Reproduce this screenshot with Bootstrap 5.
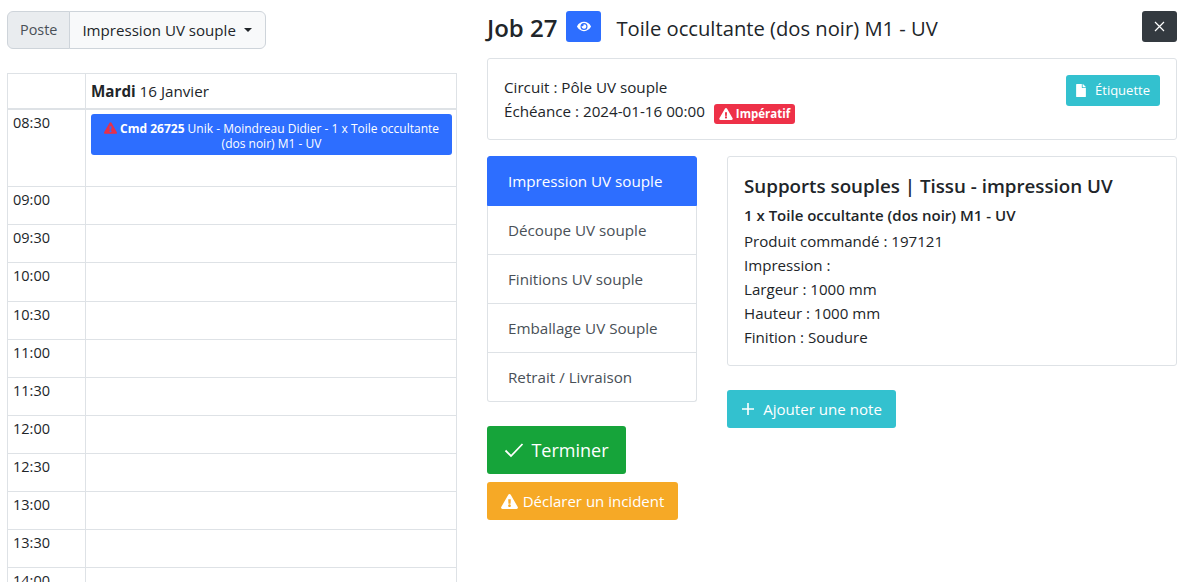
<!DOCTYPE html>
<html lang="fr"><head><meta charset="utf-8"><title>Job 27</title>
<link href="https://cdn.jsdelivr.net/npm/bootstrap@5.3.0/dist/css/bootstrap.min.css" rel="stylesheet">
<style>
html,body{height:582px;overflow:hidden}
body{font-family:"Open Sans","Noto Sans",sans-serif;font-size:15px;color:#212529;background:#fff}
.shell{display:flex;gap:30px;padding:11px 20px 0 7px}
.leftcol{width:450px;flex:none}
.rightcol{flex:1;min-width:0}
.posegroup{height:38px;margin-bottom:24px;width:259px}
.posegroup .input-group-text{background:#e9ecef;border-color:#ced4da;color:#495057;font-size:14.4px;padding:0 12px}
.posegroup .btn{background:#f8f9fa;border-color:#ced4da;color:#212529;font-size:15.1px;padding:0 12px;flex:1;white-space:nowrap;text-align:left}
.posegroup .dropdown-toggle::after{margin-left:8px}
.cal{width:450px;border-collapse:collapse;table-layout:fixed;font-size:14.5px}
.cal td,.cal th{border:1px solid #dee2e6;padding:2px 5px;vertical-align:top;height:38.1px;font-weight:400}
.cal thead th{height:34px;padding:6px 5px 5px;border-bottom-width:2px;font-size:15.2px}
.cal td.timec{width:78px}
.cal tr.tall td{height:78px}
.evt{background:#2d6eff;color:#fff;font-size:12px;line-height:15px;text-align:center;border-radius:3px;padding:7px 8px 4px;display:block;margin:2px -1px 0 0}
.evt svg{width:13px;height:12px;fill:#e8304a;vertical-align:-1px}
.jobhead{display:flex;align-items:center;height:36px;margin-top:-1px;margin-bottom:12px}
.jobhead h1{font-size:24px;font-weight:600;margin:0}
.jobhead h2{font-size:20.2px;font-weight:400;margin:0 0 0 15px;flex:1}
.sq{width:35px;height:31px;padding:0;border:0;border-radius:3px;display:flex;align-items:center;justify-content:center;align-self:flex-start;margin-top:1px}
.sq.eye{background:#2d6eff;margin-left:9px}
.sq.eye svg{width:14px;height:13px;fill:#fff}
.sq.cls{background:#343a40;color:#fff}
.boxx{border:1px solid #dee2e6;border-radius:3px;background:#fff}
.circuit{height:82px;padding:16px;display:flex;justify-content:space-between;line-height:24px;font-size:15.2px;margin-bottom:16px}
.imper{background:#ee3148;color:#fff;font-size:11.5px;font-weight:700;border-radius:3px;padding:2px 5px;margin-left:5px;display:inline-block;line-height:16px;vertical-align:-1px}
.imper svg{width:14px;height:12px;fill:#fff;vertical-align:-2px}
.btn-tq{background:#33c1cf;color:#fff;border:0;border-radius:3px;font-size:13.5px}
.btn-tq:hover{background:#33c1cf;color:#fff}
.etq{height:31px;width:94px;margin-top:0;padding:0;display:flex;align-items:center;justify-content:center;gap:9px;font-size:13px}
.etq svg{width:10px;height:13px;fill:#fff}
.lower{display:flex;gap:30px}
.steps{width:210px;flex:none}
.steps .list-group-item{height:49px;font-size:15.2px;color:#495057;display:flex;align-items:center;padding:0 20px;border-color:#dee2e6}
.steps .list-group-item.active{background:#2d6eff;border-color:#2d6eff;color:#fff;height:50px}
.steps .list-group{border-radius:3px}
.btn-done{background:#16a43a;color:#fff;border:0;border-radius:3px;font-size:18px;height:48px;width:139px;margin-top:24px;display:flex;align-items:center;justify-content:center;gap:7px;padding:0}
.btn-done svg{width:20px;height:16px;stroke:#fff;fill:none;stroke-width:1.8}
.btn-done:hover{background:#16a43a;color:#fff}
.btn-inc{background:#f6a926;color:#fff;border:0;border-radius:3px;font-size:15px;height:38px;width:191px;margin-top:8px;display:flex;align-items:center;justify-content:center;gap:5px;padding:0}
.btn-inc svg{width:17px;height:15px;fill:#fff}
.btn-inc:hover{background:#f6a926;color:#fff}
.detail{flex:1;min-width:0}
.prod{height:210px;padding:15px 16px 16px;font-size:15.1px;line-height:24px}
.prod h3{font-size:18.75px;font-weight:600;margin:0 0 3px;line-height:27px}
.prod h4{font-size:15px;font-weight:600;margin:0 0 1px;line-height:26px}
.addn{height:38px;width:169px;margin-top:24px;font-size:15.1px;display:flex;align-items:center;justify-content:center;gap:8px;padding:0}
.addn svg{width:14px;height:14px;stroke:#fff;stroke-width:1.6;fill:none}
</style></head><body>
<div class="shell">
<div class="leftcol">
<div class="input-group posegroup">
<span class="input-group-text">Poste</span>
<button class="btn dropdown-toggle" type="button">Impression UV souple</button>
</div>
<table class="cal">
<thead><tr><th class="timec" style="width:78px"></th><th><b class="fw-bold">Mardi</b> 16 Janvier</th></tr></thead>
<tbody>
<tr class="tall"><td class="timec">08:30</td><td><span class="evt"><svg viewBox="0 0 576 512"><path d="M569.517 440.013C587.975 472.007 564.806 512 527.94 512H48.054c-36.937 0-59.999-40.055-41.577-71.987L246.423 23.985c18.467-32.009 64.72-31.951 83.154 0l239.94 416.028zM288 354c-25.405 0-46 20.595-46 46s20.595 46 46 46 46-20.595 46-46-20.595-46-46-46zm-43.673-165.346l7.418 136c.347 6.364 5.609 11.346 11.982 11.346h48.546c6.373 0 11.635-4.982 11.982-11.346l7.418-136c.375-6.874-5.098-12.654-11.982-12.654h-63.383c-6.884 0-12.356 5.78-11.981 12.654z"/></svg> <b>Cmd 26725</b> Unik - Moindreau Didier - 1 x Toile occultante (dos noir) M1 - UV</span></td></tr>
<tr><td>09:00</td><td></td></tr><tr><td>09:30</td><td></td></tr><tr><td>10:00</td><td></td></tr><tr><td>10:30</td><td></td></tr><tr><td>11:00</td><td></td></tr><tr><td>11:30</td><td></td></tr><tr><td>12:00</td><td></td></tr><tr><td>12:30</td><td></td></tr><tr><td>13:00</td><td></td></tr><tr><td>13:30</td><td></td></tr><tr><td>14:00</td><td></td></tr>
</tbody></table>
</div>
<div class="rightcol">
<div class="jobhead">
<h1>Job 27</h1>
<button class="sq eye" type="button" aria-label="Voir"><svg viewBox="0 0 576 512"><path d="M572.52 241.4C518.29 135.59 410.93 64 288 64S57.68 135.64 3.48 241.41a32.35 32.35 0 0 0 0 29.19C57.71 376.41 165.07 448 288 448s230.32-71.64 284.52-177.41a32.35 32.35 0 0 0 0-29.19zM288 400a144 144 0 1 1 144-144 143.93 143.93 0 0 1-144 144zm0-240a95.31 95.31 0 0 0-25.31 3.79 47.85 47.85 0 0 1-66.9 66.9A95.78 95.78 0 1 0 288 160z"/></svg></button>
<h2>Toile occultante (dos noir) M1 - UV</h2>
<button class="sq cls" type="button" aria-label="Fermer"><svg width="11" height="11" viewBox="0 0 11 11" stroke="#fff" stroke-width="1.2" fill="none"><path d="M1 1l9 9M10 1l-9 9"/></svg></button>
</div>
<div class="boxx circuit">
<div>Circuit : Pôle UV souple<br>Échéance : 2024-01-16 00:00 <span class="imper"><svg viewBox="0 0 576 512"><path d="M569.517 440.013C587.975 472.007 564.806 512 527.94 512H48.054c-36.937 0-59.999-40.055-41.577-71.987L246.423 23.985c18.467-32.009 64.72-31.951 83.154 0l239.94 416.028zM288 354c-25.405 0-46 20.595-46 46s20.595 46 46 46 46-20.595 46-46-20.595-46-46-46zm-43.673-165.346l7.418 136c.347 6.364 5.609 11.346 11.982 11.346h48.546c6.373 0 11.635-4.982 11.982-11.346l7.418-136c.375-6.874-5.098-12.654-11.982-12.654h-63.383c-6.884 0-12.356 5.78-11.981 12.654z"/></svg> Impératif</span></div>
<button class="btn btn-tq etq" type="button"><svg viewBox="0 0 384 512"><path d="M224 136V0H24C10.7 0 0 10.7 0 24v464c0 13.3 10.7 24 24 24h336c13.3 0 24-10.7 24-24V160H248c-13.2 0-24-10.8-24-24zm160-14.1v6.1H256V0h6.1c6.4 0 12.5 2.5 17 7l97.9 98c4.5 4.5 7 10.6 7 16.9z"/></svg>Étiquette</button>
</div>
<div class="lower">
<div class="steps">
<div class="list-group">
<a class="list-group-item active">Impression UV souple</a>
<a class="list-group-item">Découpe UV souple</a>
<a class="list-group-item">Finitions UV souple</a>
<a class="list-group-item">Emballage UV Souple</a>
<a class="list-group-item">Retrait / Livraison</a>
</div>
<button class="btn btn-done" type="button"><svg viewBox="0 0 20 16"><path d="M1.5 8.5l5.5 5.5L18.5 2"/></svg>Terminer</button>
<button class="btn btn-inc" type="button"><svg viewBox="0 0 576 512"><path d="M569.517 440.013C587.975 472.007 564.806 512 527.94 512H48.054c-36.937 0-59.999-40.055-41.577-71.987L246.423 23.985c18.467-32.009 64.72-31.951 83.154 0l239.94 416.028zM288 354c-25.405 0-46 20.595-46 46s20.595 46 46 46 46-20.595 46-46-20.595-46-46-46zm-43.673-165.346l7.418 136c.347 6.364 5.609 11.346 11.982 11.346h48.546c6.373 0 11.635-4.982 11.982-11.346l7.418-136c.375-6.874-5.098-12.654-11.982-12.654h-63.383c-6.884 0-12.356 5.78-11.981 12.654z"/></svg>Déclarer un incident</button>
</div>
<div class="detail">
<div class="boxx prod">
<h3>Supports souples | Tissu - impression UV</h3>
<h4>1 x Toile occultante (dos noir) M1 - UV</h4>
Produit commandé : 197121<br>Impression :<br>Largeur : 1000 mm<br>Hauteur : 1000 mm<br>Finition : Soudure
</div>
<button class="btn btn-tq addn" type="button"><svg viewBox="0 0 14 14"><path d="M7 1v12M1 7h12"/></svg>Ajouter une note</button>
</div>
</div>
</div>
</div>
<script src="https://cdn.jsdelivr.net/npm/bootstrap@5.3.0/dist/js/bootstrap.bundle.min.js"></script>
</body></html>
